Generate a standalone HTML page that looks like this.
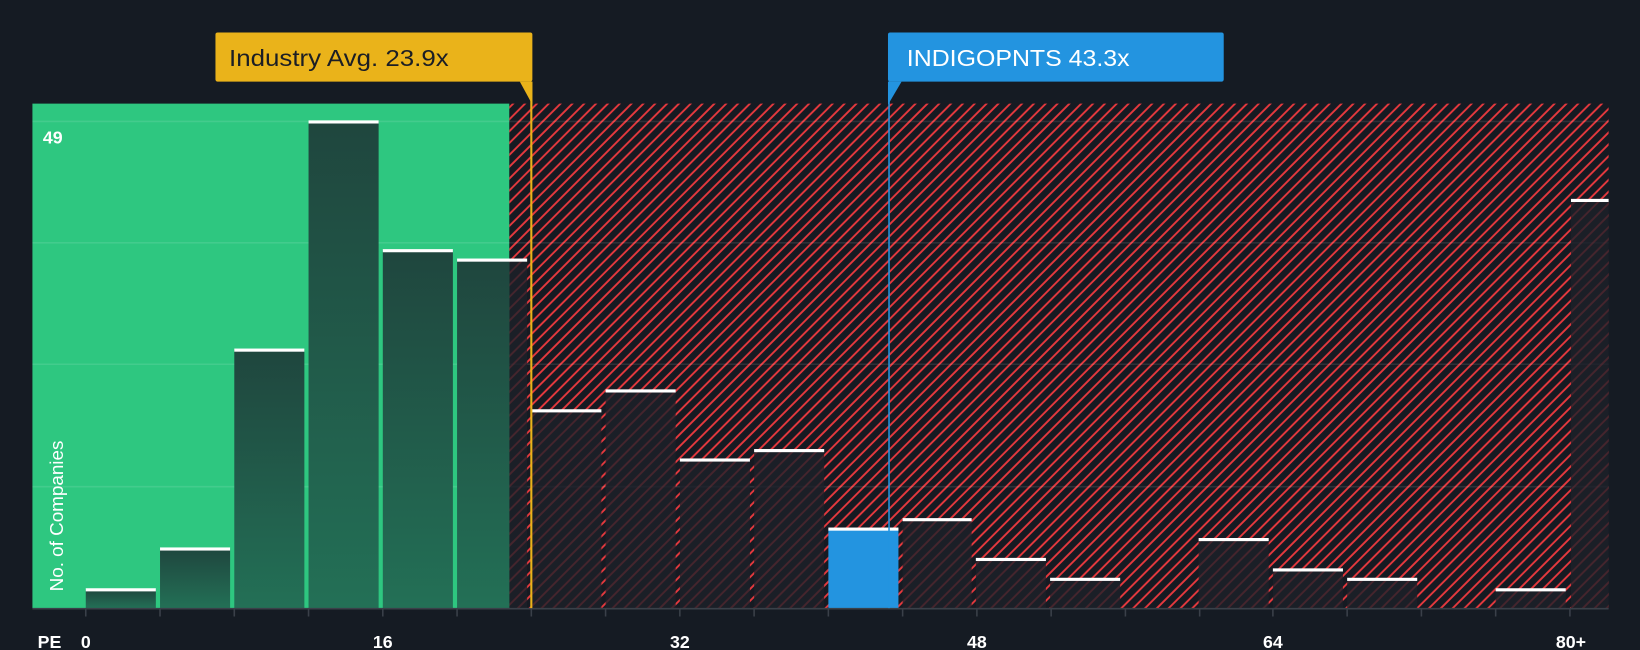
<!DOCTYPE html>
<html><head><meta charset="utf-8"><style>
html,body{margin:0;padding:0;background:#151b23;width:1640px;height:650px;overflow:hidden}
svg{display:block}
text{font-family:"Liberation Sans",sans-serif}
</style></head><body>
<svg width="1640" height="650" viewBox="0 0 1568 621" preserveAspectRatio="none">
<defs>
<pattern id="h" width="8" height="8" patternUnits="userSpaceOnUse" patternTransform="rotate(45)">
<rect width="8" height="8" fill="#161a22"/>
<line x1="1" y1="0" x2="1" y2="8" stroke="#e8393e" stroke-width="1.8"/>
</pattern>
<linearGradient id="g" x1="0" y1="0" x2="0" y2="1"><stop offset="0" stop-color="#1f463e"/><stop offset="1" stop-color="#237056"/></linearGradient>
</defs>
<rect width="1568" height="621" fill="#151b23"/>
<rect x="31" y="99" width="456" height="482" fill="#2ec780"/>
<rect x="487" y="99" width="1051" height="482" fill="url(#h)"/>
<g stroke="#ffffff" stroke-opacity="0.1" stroke-width="1.5">
<line x1="31" y1="116" x2="1538" y2="116"/><line x1="31" y1="232" x2="1538" y2="232"/><line x1="31" y1="348" x2="1538" y2="348"/><line x1="31" y1="465" x2="1538" y2="465"/>
</g>
<g fill="url(#g)">
<rect x="82" y="563" width="67" height="18"/><rect x="153" y="524" width="67" height="57"/><rect x="224" y="334" width="67" height="247"/><rect x="295" y="116" width="67" height="465"/><rect x="366" y="239" width="67" height="342"/><rect x="437" y="248" width="50" height="333"/>
</g>
<rect x="487" y="248" width="17" height="333" fill="#1d2029" fill-opacity="0.8"/>
<g fill="#1d2029" fill-opacity="0.8">
<rect x="508" y="392" width="67" height="189"/><rect x="579" y="373" width="67" height="208"/><rect x="650" y="439" width="67" height="142"/><rect x="721" y="430" width="67" height="151"/><rect x="863" y="496" width="66" height="85"/><rect x="933" y="534" width="67" height="47"/><rect x="1004" y="553" width="67" height="28"/><rect x="1146" y="515" width="67" height="66"/><rect x="1217" y="544" width="67" height="37"/><rect x="1288" y="553" width="67" height="28"/><rect x="1430" y="563" width="67" height="18"/><rect x="1502" y="191" width="36" height="390"/>
</g>
<rect x="792" y="505" width="67" height="76" fill="#2394e0"/>
<g fill="#ffffff">
<rect x="82" y="562" width="67" height="3"/><rect x="153" y="523" width="67" height="3"/><rect x="224" y="333" width="67" height="3"/><rect x="295" y="115" width="67" height="3"/><rect x="366" y="238" width="67" height="3"/><rect x="437" y="247" width="67" height="3"/><rect x="508" y="391" width="67" height="3"/><rect x="579" y="372" width="67" height="3"/><rect x="650" y="438" width="67" height="3"/><rect x="721" y="429" width="67" height="3"/><rect x="792" y="504" width="67" height="3"/><rect x="863" y="495" width="66" height="3"/><rect x="933" y="533" width="67" height="3"/><rect x="1004" y="552" width="67" height="3"/><rect x="1146" y="514" width="67" height="3"/><rect x="1217" y="543" width="67" height="3"/><rect x="1288" y="552" width="67" height="3"/><rect x="1430" y="562" width="67" height="3"/><rect x="1502" y="190" width="36" height="3"/>
</g>
<line x1="31" y1="581.5" x2="1538" y2="581.5" stroke="#3a4049" stroke-width="1.5"/>
<g stroke="#3a4049" stroke-width="1.5">
<line x1="82" y1="581" x2="82" y2="589"/><line x1="153" y1="581" x2="153" y2="589"/><line x1="224" y1="581" x2="224" y2="589"/><line x1="295" y1="581" x2="295" y2="589"/><line x1="366" y1="581" x2="366" y2="589"/><line x1="437" y1="581" x2="437" y2="589"/><line x1="508" y1="581" x2="508" y2="589"/><line x1="579" y1="581" x2="579" y2="589"/><line x1="650" y1="581" x2="650" y2="589"/><line x1="721" y1="581" x2="721" y2="589"/><line x1="792" y1="581" x2="792" y2="589"/><line x1="863" y1="581" x2="863" y2="589"/><line x1="934" y1="581" x2="934" y2="589"/><line x1="1005" y1="581" x2="1005" y2="589"/><line x1="1076" y1="581" x2="1076" y2="589"/><line x1="1147" y1="581" x2="1147" y2="589"/><line x1="1217" y1="581" x2="1217" y2="589"/><line x1="1288" y1="581" x2="1288" y2="589"/><line x1="1359" y1="581" x2="1359" y2="589"/><line x1="1430" y1="581" x2="1430" y2="589"/><line x1="1501" y1="581" x2="1501" y2="589"/>
</g>
<line x1="508" y1="78" x2="508" y2="581" stroke="#eab31a" stroke-width="2"/>
<rect x="206" y="31" width="303" height="47" rx="2" fill="#eab31a"/>
<polygon points="497,78 509,78 509,100" fill="#eab31a"/>
<text x="219" y="63" font-size="22" fill="#1b1e25" textLength="210" lengthAdjust="spacingAndGlyphs">Industry Avg. 23.9x</text>
<line x1="850" y1="78" x2="850" y2="581" stroke="#2394e0" stroke-width="1.5"/>
<rect x="849" y="31" width="321" height="47" rx="2" fill="#2394e0"/>
<polygon points="849,78 862,78 849,100" fill="#2394e0"/>
<text x="867" y="63" font-size="22" fill="#ffffff" textLength="213" lengthAdjust="spacingAndGlyphs">INDIGOPNTS 43.3x</text>
<text x="41" y="137" font-size="17" font-weight="bold" fill="#ffffff">49</text>
<text transform="translate(60,565) rotate(-90)" font-size="18" fill="#ffffff">No. of Companies</text>
<g font-size="17" font-weight="bold" fill="#ffffff" text-anchor="middle">
<text x="36" y="619" text-anchor="start">PE</text>
<text x="82" y="619">0</text><text x="366" y="619">16</text><text x="650" y="619">32</text><text x="934" y="619">48</text><text x="1217" y="619">64</text><text x="1502" y="619">80+</text>
</g>
</svg>
</body></html>
